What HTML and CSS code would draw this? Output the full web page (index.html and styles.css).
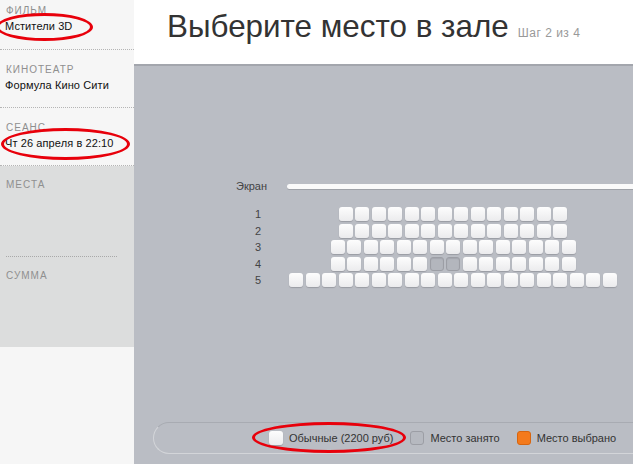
FILE: index.html
```html
<!DOCTYPE html>
<html lang="ru">
<head>
<meta charset="utf-8">
<title>Выберите место в зале</title>
<link rel="stylesheet" href="styles.css">
</head>
<body>
<div class="page">
  <aside class="sidebar">
    <div class="info info-first">
      <div class="label">ФИЛЬМ</div>
      <div class="value"><span class="mark mark-film"></span>Мстители 3D</div>
    </div>
    <div class="info">
      <div class="label">КИНОТЕАТР</div>
      <div class="value">Формула Кино Сити</div>
    </div>
    <div class="info">
      <div class="label">СЕАНС</div>
      <div class="value"><span class="mark mark-session"></span>Чт 26 апреля в 22:10</div>
    </div>
    <div class="order">
      <div class="order-part">
        <div class="label">МЕСТА</div>
      </div>
      <div class="order-part order-sum">
        <div class="label">СУММА</div>
      </div>
    </div>
  </aside>
  <main class="main">
    <header class="header">
      <h1 class="title">Выберите место в зале</h1>
      <span class="step">Шаг 2 из 4</span>
    </header>
    <section class="hall">
      <div class="screen-row">
        <span class="screen-label">Экран</span>
        <span class="screen"></span>
      </div>
      <div class="rows">
        <div class="nums">
          <span>1</span><span>2</span><span>3</span><span>4</span><span>5</span>
        </div>
        <div class="seats">
          <div class="row">
            <i class="seat"></i><i class="seat"></i><i class="seat"></i><i class="seat"></i><i class="seat"></i><i class="seat"></i><i class="seat"></i><i class="seat"></i><i class="seat"></i><i class="seat"></i><i class="seat"></i><i class="seat"></i><i class="seat"></i><i class="seat"></i>
          </div>
          <div class="row">
            <i class="seat"></i><i class="seat"></i><i class="seat"></i><i class="seat"></i><i class="seat"></i><i class="seat"></i><i class="seat"></i><i class="seat"></i><i class="seat"></i><i class="seat"></i><i class="seat"></i><i class="seat"></i><i class="seat"></i><i class="seat"></i>
          </div>
          <div class="row">
            <i class="seat"></i><i class="seat"></i><i class="seat"></i><i class="seat"></i><i class="seat"></i><i class="seat"></i><i class="seat"></i><i class="seat"></i><i class="seat"></i><i class="seat"></i><i class="seat"></i><i class="seat"></i><i class="seat"></i><i class="seat"></i><i class="seat"></i>
          </div>
          <div class="row">
            <i class="seat"></i><i class="seat"></i><i class="seat"></i><i class="seat"></i><i class="seat"></i><i class="seat"></i><i class="seat taken"></i><i class="seat taken"></i><i class="seat"></i><i class="seat"></i><i class="seat"></i><i class="seat"></i><i class="seat"></i><i class="seat"></i><i class="seat"></i>
          </div>
          <div class="row">
            <i class="seat"></i><i class="seat"></i><i class="seat"></i><i class="seat"></i><i class="seat"></i><i class="seat"></i><i class="seat"></i><i class="seat"></i><i class="seat"></i><i class="seat"></i><i class="seat"></i><i class="seat"></i><i class="seat"></i><i class="seat"></i><i class="seat"></i><i class="seat"></i><i class="seat"></i><i class="seat"></i><i class="seat"></i><i class="seat"></i>
          </div>
        </div>
      </div>
      <div class="legend">
        <div class="legend-item legend-regular">
          <span class="mark mark-legend"></span>
          <i class="swatch swatch-free"></i>Обычные (2200 руб)
        </div>
        <div class="legend-item">
          <i class="swatch swatch-taken"></i>Место занято
        </div>
        <div class="legend-item">
          <i class="swatch swatch-selected"></i>Место выбрано
        </div>
      </div>
    </section>
  </main>
</div>
</body>
</html>
```

FILE: styles.css
```css
* { box-sizing: border-box; }

html, body {
  margin: 0;
  padding: 0;
  height: 100%;
  overflow: hidden;
}

body {
  font-family: "Liberation Sans", Arial, sans-serif;
  color: #222;
  background: #babdc4;
}

.page {
  display: flex;
  height: 464px;
}

/* Sidebar */
.sidebar {
  width: 134px;
  flex: 0 0 134px;
  background: #f6f6f6;
  display: flex;
  flex-direction: column;
}

.info {
  position: relative;
  padding: 14px 0 0 6px;
  height: 58px;
  border-bottom: 1px dotted #b5b5b5;
}

.info-first {
  height: 50px;
  padding-top: 5px;
}

.label {
  font-size: 10px;
  letter-spacing: 1px;
  color: #8f8f8f;
  line-height: 12px;
}

.value {
  position: relative;
  font-size: 11px;
  line-height: 14px;
  color: #111;
  margin-top: 2px;
  margin-left: -1px;
  letter-spacing: 0.1px;
}

.order {
  background: #dcdddd;
  height: 181px;
  padding: 0 17px 0 6px;
}

.order-part {
  height: 91px;
  padding-top: 13px;
  border-bottom: 1px dotted #a9a9a9;
}

.order-sum {
  border-bottom: none;
  padding-top: 13px;
}

/* Red annotation ellipses */
.mark {
  position: absolute;
  border: 3px solid #e8000b;
  border-radius: 50%;
  pointer-events: none;
}

.mark-film {
  left: -9px;
  top: -6px;
  width: 97px;
  height: 28px;
}

.mark-session {
  left: -4px;
  top: -8px;
  width: 129px;
  height: 32px;
}

.mark-legend {
  left: -17px;
  top: -9px;
  width: 154px;
  height: 31px;
}

/* Main */
.main {
  flex: 1;
  display: flex;
  flex-direction: column;
  min-width: 0;
}

.header {
  height: 66px;
  flex: 0 0 66px;
  background: #fff;
  border-bottom: 2px solid #a3a6ad;
  display: flex;
  align-items: baseline;
  padding: 9px 0 0 33px;
  white-space: nowrap;
}

.title {
  margin: 0;
  font-weight: normal;
  font-size: 31.4px;
  color: #333;
}

.step {
  margin-left: 9px;
  font-size: 12px;
  letter-spacing: 0.5px;
  color: #999;
}

.hall {
  flex: 1;
  display: flex;
  flex-direction: column;
  padding-top: 113px;
  min-width: 0;
}

.screen-row {
  display: flex;
  align-items: center;
  padding-left: 102px;
  height: 14px;
}

.screen-label {
  font-size: 11px;
  color: #444;
  width: 51px;
}

.screen {
  flex: 1;
  height: 5px;
  background: #fafafa;
  border-radius: 3px 0 0 3px;
  box-shadow: 0 1px 0 #9fa2a8;
}

.rows {
  display: flex;
  margin-top: 14px;
  padding-left: 116px;
}

.nums {
  width: 16px;
  display: flex;
  flex-direction: column;
  gap: 2.5px;
  font-size: 11px;
  color: #444;
  text-align: center;
}

.nums span {
  height: 14px;
  line-height: 14px;
}

.seats {
  margin-left: 24px;
  width: 326px;
  flex: 0 0 326px;
  display: flex;
  flex-direction: column;
  gap: 2.5px;
}

.row {
  display: flex;
  justify-content: center;
  gap: 2.5px;
}

.seat {
  width: 14px;
  height: 14px;
  flex: 0 0 14px;
  border-radius: 3px;
  background: linear-gradient(#fdfdfd, #ebebed);
  box-shadow: 0 1px 1px #9a9ca3;
}

.seat.taken {
  background: #b3b6bd;
  border: 1px solid #9c9ea5;
  box-shadow: inset 0 1px 1px #a3a6ad;
}

/* Legend */
.legend {
  margin: auto 0 10px 19px;
  height: 32px;
  border: 1px solid #d3d5d9;
  border-right: none;
  border-top-color: #a8abb2;
  border-radius: 16px 0 0 16px;
  display: flex;
  align-items: center;
  padding-left: 115px;
  font-size: 11px;
  color: #333;
  white-space: nowrap;
  overflow: visible;
}

.legend-item {
  position: relative;
  display: flex;
  align-items: center;
  flex: 0 0 auto;
  margin-right: 17px;
}

.swatch {
  width: 14px;
  height: 14px;
  flex: 0 0 14px;
  border-radius: 3px;
  margin-right: 6px;
}

.swatch-free {
  background: linear-gradient(#fdfdfd, #ececee);
  box-shadow: 0 1px 1px #9a9ca3;
}

.swatch-taken {
  background: #b6b9c0;
  border: 1px solid #9c9ea5;
}

.swatch-selected {
  background: #f47a1c;
  border: 1px solid #d7650f;
}
```
